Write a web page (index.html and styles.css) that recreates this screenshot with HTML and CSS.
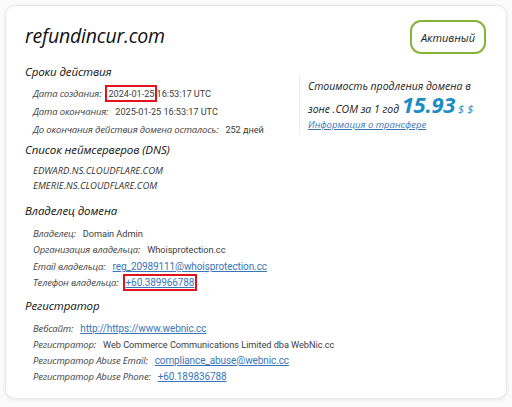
FILE: index.html
```html
<!DOCTYPE html>
<html lang="ru">
<head>
<meta charset="utf-8">
<link rel="stylesheet" href="styles.css">
</head>
<body>
<div class="card">
  <div class="top">
    <h1 class="domain">refundincur.com</h1>
    <div class="badge">Активный</div>
  </div>

  <div class="first">
    <section class="sec sec-dates">
      <h2 class="sec-title">Сроки действия</h2>
      <div class="rows">
        <div class="row"><span class="lbl">Дата создания:</span><span class="val"><span class="mark">2024-01-25</span> 16:53:17 UTC</span></div>
        <div class="row"><span class="lbl">Дата окончания:</span><span class="val">2025-01-25 16:53:17 UTC</span></div>
        <div class="row"><span class="lbl">До окончания действия домена осталось:</span><span class="val">252 дней</span></div>
      </div>
    </section>
    <aside class="price">
      <p class="price-text">Стоимость продления домена в зоне .COM за 1 год <span class="sum">15.93</span> <span class="cur">$ $</span></p>
      <a class="price-link" href="#">Информация о трансфере</a>
    </aside>
  </div>

  <section class="sec sec-dns">
    <h2 class="sec-title">Список неймсерверов (DNS)</h2>
    <div class="rows">
      <div class="ns">EDWARD.NS.CLOUDFLARE.COM</div>
      <div class="ns">EMERIE.NS.CLOUDFLARE.COM</div>
    </div>
  </section>

  <section class="sec sec-owner">
    <h2 class="sec-title">Владелец домена</h2>
    <div class="rows">
      <div class="row"><span class="lbl">Владелец:</span><span class="val">Domain Admin</span></div>
      <div class="row"><span class="lbl">Организация владельца:</span><span class="val">Whoisprotection.cc</span></div>
      <div class="row"><span class="lbl">Email владельца:</span><a class="val link" href="#">reg_20989111@whoisprotection.cc</a></div>
      <div class="row"><span class="lbl">Телефон владельца:</span><a class="val link mark" href="#">+60.389966788</a></div>
    </div>
  </section>

  <section class="sec sec-reg">
    <h2 class="sec-title">Регистратор</h2>
    <div class="rows">
      <div class="row"><span class="lbl">Вебсайт:</span><a class="val link" href="#">http://https://www.webnic.cc</a></div>
      <div class="row"><span class="lbl">Регистратор:</span><span class="val">Web Commerce Communications Limited dba WebNic.cc</span></div>
      <div class="row"><span class="lbl">Регистратор Abuse Email:</span><a class="val link" href="#">compliance_abuse@webnic.cc</a></div>
      <div class="row"><span class="lbl">Регистратор Abuse Phone:</span><a class="val link" href="#">+60.189836788</a></div>
    </div>
  </section>
</div>
</body>
</html>
```

FILE: styles.css
```css
* { box-sizing: border-box; }
html, body { margin: 0; padding: 0; }
body {
  background: #fbfbfb;
  font-family: "Open Sans", "Liberation Sans", sans-serif;
  color: #333;
  width: 512px;
  height: 407px;
  padding: 5px 5px 8px 5px;
}
.card {
  background: #fff;
  border: 1px solid #e8e8e8;
  border-radius: 10px;
  box-shadow: 0 1px 4px rgba(0,0,0,0.08);
  height: 394px;
  padding: 14px 20px 0 19px;
}
.top {
  display: flex;
  justify-content: space-between;
  align-items: flex-start;
}
.domain {
  margin: 3px 0 0 0;
  font-size: 19.5px;
  font-style: italic;
  font-weight: 500;
  color: #111;
  letter-spacing: -0.2px;
  line-height: 26px;
}
.badge {
  width: 76px;
  height: 34px;
  border: 2px solid #86b33a;
  border-radius: 11px;
  display: flex;
  align-items: center;
  justify-content: center;
  font-style: italic;
  font-size: 11px;
  color: #222;
}
.first {
  display: flex;
  align-items: flex-start;
}
.sec-dates { flex: 0 0 274px; }
.sec-title {
  margin: 0;
  font-size: 11.5px;
  font-style: italic;
  font-weight: 400;
  color: #111;
  line-height: 20px;
  letter-spacing: -0.1px;
}
.sec-dates .sec-title { margin-top: 8px; }
.rows {
  display: flex;
  flex-direction: column;
  padding-left: 8px;
}
.row {
  display: flex;
  align-items: center;
  gap: 7px;
  font-size: 9.5px;
  white-space: nowrap;
}
.sec-dates .rows { padding: 2px 0 2px 8px; }
.sec-dates .row { height: 18px; }
.sec-owner .rows { padding: 4px 0 5px 8px; }
.sec-owner .row { height: 16.5px; }
.sec-reg .rows { padding: 4px 0 0 8px; }
.sec-reg .row { height: 16px; }
.sec-dns .rows { padding: 3px 0 8px 8px; }
.lbl {
  font-style: italic;
  color: #444;
  letter-spacing: -0.15px;
}
.val {
  font-family: Roboto, "Liberation Sans", sans-serif;
  font-size: 9.2px;
  color: #3d3d3d;
  letter-spacing: -0.05px;
}
.link {
  font-size: 10px;
  letter-spacing: -0.1px;
  color: #3a75b8;
  text-decoration: underline;
}
.mark {
  outline: 2px solid #e0141e;
  outline-offset: 1px;
}
.ns {
  font-style: italic;
  font-size: 9.5px;
  line-height: 15px;
  color: #333;
}
.price {
  border-left: 1px solid #ececec;
  margin-top: 21px;
  padding: 2px 0 2px 8px;
  width: 190px;
}
.price-text {
  margin: 0;
  font-style: italic;
  font-size: 10.5px;
  line-height: 18px;
  color: #222;
}
.sum {
  display: inline-block;
  font-size: 22px;
  font-weight: 700;
  color: #1b8dc6;
  line-height: 18px;
  letter-spacing: -0.3px;
}
.cur {
  font-size: 11.5px;
  color: #1b8dc6;
}
.price-link {
  display: block;
  font-style: italic;
  font-size: 9.5px;
  color: #3a75b8;
  line-height: 14px;
}
```
